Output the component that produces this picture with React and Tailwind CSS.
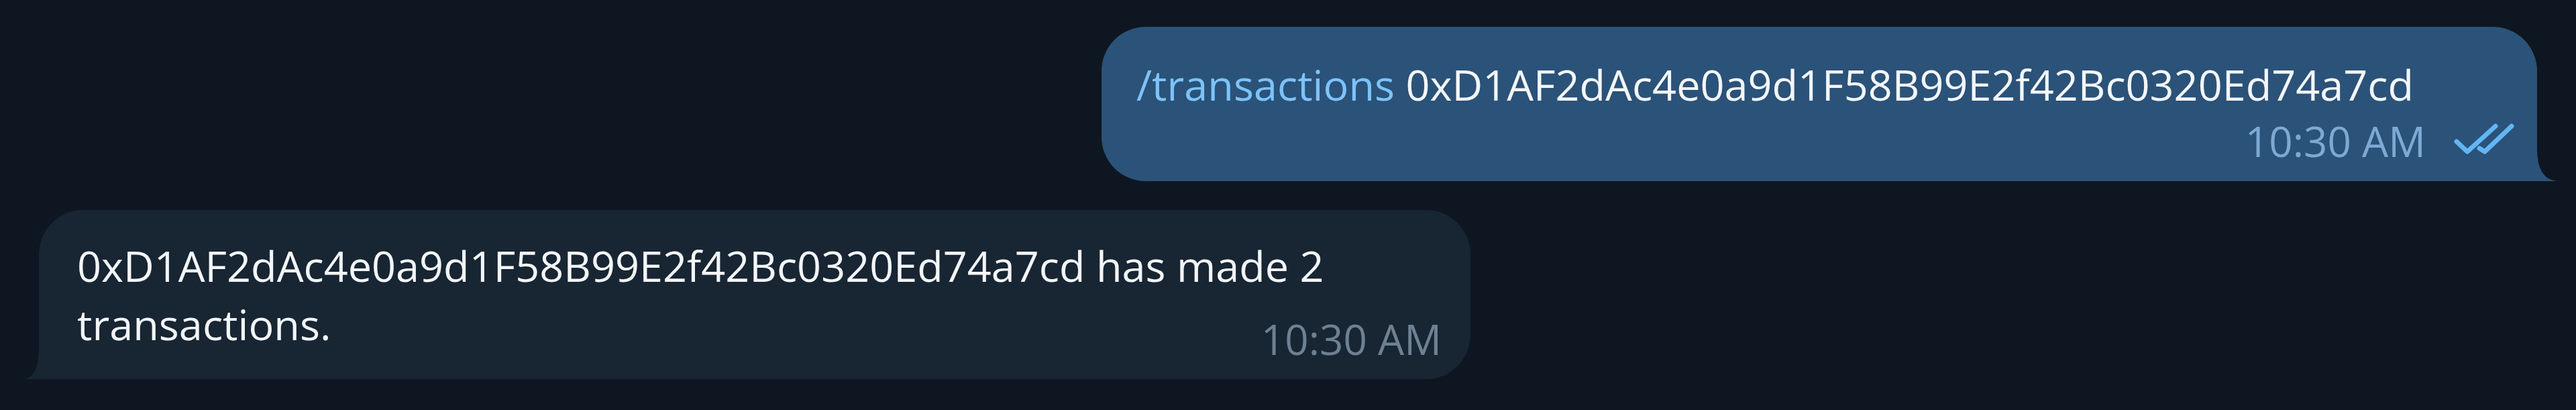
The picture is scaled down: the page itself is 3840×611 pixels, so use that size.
import React from "react";

function DoubleCheck() {
  return (
    <svg width="90" height="48" viewBox="0 0 90 48" fill="none" className="shrink-0 mb-[8px]">
      <path d="M4 28 L20 43 L62 5" stroke="#62b6f5" strokeWidth="7" strokeLinecap="round" strokeLinejoin="round" />
      <path d="M38 38 L46 43 L86 5" stroke="#62b6f5" strokeWidth="7" strokeLinecap="round" strokeLinejoin="round" />
    </svg>
  );
}

export default function App() {
  return (
    <div
      className="min-h-[611px] w-full bg-[#0e1621] flex flex-col pt-[40px] gap-[43px]"
      style={{ fontFamily: '"Open Sans", "Noto Sans", sans-serif' }}
    >
      {/* Outgoing */}
      <div className="flex justify-end pr-[58px]">
        <div className="relative w-[2140px] rounded-[66px] rounded-br-none bg-[#2b5278] pl-[52px] pr-[34px] pt-[42px] pb-[16px]">
          <div className="text-[63px] leading-[87px] text-[#f3f6f9] whitespace-nowrap">
            <span className="text-[#7cc3fa]">/transactions</span> 0xD1AF2dAc4e0a9d1F58B99E2f42Bc0320Ed74a7cd
          </div>
          <div className="-mt-[2px] flex justify-end items-center gap-[42px] leading-[87px]">
            <span className="text-[62px] text-[#7ea9d2]">10:30 AM</span>
            <DoubleCheck />
          </div>
          <svg className="absolute -right-[31px] bottom-0" width="31" height="48" viewBox="0 0 31 48">
            <path d="M0 0 Q0 46 31 48 L0 48 Z" fill="#2b5278" />
          </svg>
        </div>
      </div>

      {/* Incoming */}
      <div className="flex justify-start pl-[58px]">
        <div className="relative w-[2134px] rounded-[66px] rounded-bl-none bg-[#182533] pl-[57px] pr-[43px] pt-[39px] pb-[16px]">
          <div className="text-[63px] leading-[87px] text-[#f3f6f9] whitespace-nowrap">
            0xD1AF2dAc4e0a9d1F58B99E2f42Bc0320Ed74a7cd has made 2
          </div>
          <div className="flex justify-between items-start">
            <span className="text-[63px] leading-[87px] text-[#f3f6f9]">transactions.</span>
            <span className="mt-[23px] text-[62px] leading-[87px] text-[#6d8193]">10:30 AM</span>
          </div>
          <svg className="absolute -left-[23px] bottom-0" width="23" height="48" viewBox="0 0 23 48">
            <path d="M23 0 Q23 46 0 48 L23 48 Z" fill="#182533" />
          </svg>
        </div>
      </div>
    </div>
  );
}
